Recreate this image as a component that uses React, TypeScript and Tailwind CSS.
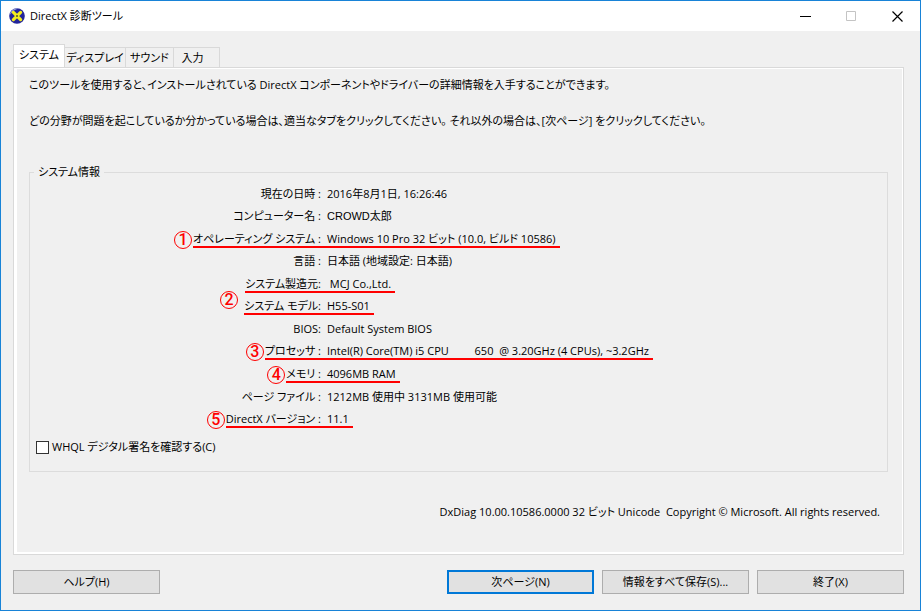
import type { ReactNode } from 'react'

type InfoRow = {
  label: string
  value: string
  marked?: boolean
  badge?: string
  badgeRaised?: boolean
  plain?: boolean
}

const rows: InfoRow[] = [
  { label: '現在の日時 :', value: '2016年8月1日, 16:26:46' },
  { label: 'コンピューター名 :', value: 'CROWD太郎', plain: true },
  {
    label: 'オペレーティング システム :',
    value: 'Windows 10 Pro 32 ビット (10.0, ビルド 10586)',
    marked: true,
    badge: '1',
  },
  { label: '言語 :', value: '日本語 (地域設定: 日本語)' },
  { label: 'システム製造元:', value: ' MCJ Co.,Ltd.', marked: true },
  { label: 'システム モデル:', value: 'H55-S01', marked: true, badge: '2', badgeRaised: true },
  { label: 'BIOS:', value: 'Default System BIOS' },
  {
    label: 'プロセッサ :',
    value: 'Intel(R) Core(TM) i5 CPU         650  @ 3.20GHz (4 CPUs), ~3.2GHz',
    marked: true,
    badge: '3',
  },
  { label: 'メモリ :', value: '4096MB RAM', marked: true, badge: '4' },
  { label: 'ページ ファイル :', value: '1212MB 使用中 3131MB 使用可能' },
  { label: 'DirectX バージョン :', value: '11.1', marked: true, badge: '5' },
]

const tabs = ['システム', 'ディスプレイ', 'サウンド', '入力']

function DirectXIcon() {
  return (
    <svg width="16" height="16" viewBox="0 0 16 16" aria-hidden="true">
      <circle cx="8" cy="8" r="7.8" fill="#23259a" />
      <path d="M.6 7A7.6 7.6 0 0 1 9 .4L4.6 2.8Z" fill="#8f9ad6" />
      <path d="M4.4 4.4l7.2 7.2M11.6 4.4l-7.2 7.2" stroke="#f4ee1c" strokeWidth="3.2" strokeLinecap="round" />
      <circle cx="8" cy="8" r="1" fill="#55541f" />
    </svg>
  )
}

function TitleBar() {
  return (
    <header className="flex h-[30px] items-center justify-between bg-white pl-2">
      <div className="flex items-center gap-[5px]">
        <DirectXIcon />
        <h1>DirectX 診断ツール</h1>
      </div>
      <div className="flex h-full">
        <button type="button" aria-label="最小化" className="flex w-[46px] items-center justify-center">
          <svg width="11" height="11" viewBox="0 0 11 11">
            <path d="M0 5.5h11" stroke="#000" />
          </svg>
        </button>
        <button type="button" aria-label="最大化" disabled className="flex w-[46px] items-center justify-center">
          <svg width="10" height="10" viewBox="0 0 10 10">
            <path d="M.5.5h9v9h-9z" stroke="#c4c4c4" fill="none" />
          </svg>
        </button>
        <button type="button" aria-label="閉じる" className="flex w-[46px] items-center justify-center">
          <svg width="11" height="11" viewBox="0 0 11 11">
            <path d="M.5.5l10 10M10.5.5l-10 10" stroke="#000" strokeWidth="1.2" />
          </svg>
        </button>
      </div>
    </header>
  )
}

function TabBar() {
  return (
    <div role="tablist" className="flex items-end whitespace-nowrap">
      {tabs.map((tab, i) => (
        <button
          key={tab}
          type="button"
          role="tab"
          aria-selected={i === 0}
          className={
            i === 0
              ? 'h-[23px] w-[52px] border border-b-0 border-[#d9d9d9] bg-white pb-0.5'
              : i === 1
                ? 'h-5 w-[61px] border-t border-r border-[#d9d9d9]'
                : i === 2
                  ? 'h-5 w-12 border-t border-r border-[#d9d9d9]'
                  : 'h-5 w-[46px] border-t border-r border-[#d9d9d9] pr-2'
          }
        >
          {tab}
        </button>
      ))}
    </div>
  )
}

function InfoTable() {
  return (
    <table className="mt-[3px] h-[248px] w-full border-collapse">
      <tbody>
        {rows.map((row) => (
          <tr key={row.label}>
            <th scope="row" className="w-[297px] p-0 text-right font-normal">
              <span
                className={`relative inline-block border-b-2 pr-1.5 leading-[14px] whitespace-pre ${
                  row.marked ? 'border-[#ff0000]' : 'border-transparent'
                }`}
              >
                {row.badge && (
                  <span
                    className={`absolute right-full flex size-[18px] items-center justify-center rounded-full border border-[#ff0000] font-[Roboto] text-base font-medium text-[#ff0000] ${
                      row.badgeRaised ? '-top-2 mr-1.5' : '-top-px mr-px'
                    }`}
                  >
                    {row.badge}
                  </span>
                )}
                {row.label}
              </span>
            </th>
            <td className="p-0">
              <span
                className={`inline-block border-b-2 pr-1 leading-[14px] whitespace-pre ${
                  row.marked ? 'border-[#ff0000]' : 'border-transparent'
                } ${row.plain ? "font-['Liberation_Sans','Noto_Sans_CJK_JP',sans-serif]" : ''}`}
              >
                {row.value}
              </span>
            </td>
          </tr>
        ))}
      </tbody>
    </table>
  )
}

function DialogButton({ children, primary }: { children: ReactNode; primary?: boolean }) {
  return (
    <button
      type="button"
      className={`h-6 w-[147px] bg-[#e1e1e1] ${
        primary ? 'border-2 border-[#0078d7]' : 'border border-[#adadad]'
      }`}
    >
      {children}
    </button>
  )
}

export default function App() {
  return (
    <div className="flex min-h-screen flex-col border border-[#1883d7] bg-[#f0f0f0] font-['Open_Sans','Noto_Sans_CJK_JP',sans-serif] text-[11px] leading-4 text-black [font-feature-settings:'palt']">
      <TitleBar />
      <main className="flex flex-1 flex-col pt-[13px] pr-4 pb-4 pl-3">
        <TabBar />
        <section className="flex flex-1 flex-col border border-[#d9d9d9]">
          <div className="flex flex-1 flex-col border-2 border-t-1 border-r-1 border-l-3 border-white pt-2 pr-[14px] pl-3">
            <p>このツールを使用すると、インストールされている DirectX コンポーネントやドライバーの詳細情報を入手することができます。</p>
            <p className="mt-5">
              どの分野が問題を起こしているか分かっている場合は、適当なタブをクリックしてください。 それ以外の場合は、[次ページ] をクリックしてください。
            </p>
            <fieldset className="mt-[35px] border border-[#dcdcdc] pb-4">
              <legend className="ml-1 px-1">システム情報</legend>
              <InfoTable />
              <label className="mt-2 ml-1.5 flex w-fit items-center gap-[3px]">
                <input type="checkbox" className="size-[13px] appearance-none border border-[#333333] bg-white" />
                WHQL デジタル署名を確認する(C)
              </label>
            </fieldset>
            <p className="mt-8 pr-2 text-right whitespace-pre">
              DxDiag 10.00.10586.0000 32 ビット Unicode  Copyright © Microsoft. All rights reserved.
            </p>
          </div>
        </section>
        <footer className="mt-[15px] flex justify-between">
          <DialogButton>ヘルプ(H)</DialogButton>
          <div className="flex gap-2">
            <DialogButton primary>次ページ(N)</DialogButton>
            <DialogButton>情報をすべて保存(S)...</DialogButton>
            <DialogButton>終了(X)</DialogButton>
          </div>
        </footer>
      </main>
    </div>
  )
}
